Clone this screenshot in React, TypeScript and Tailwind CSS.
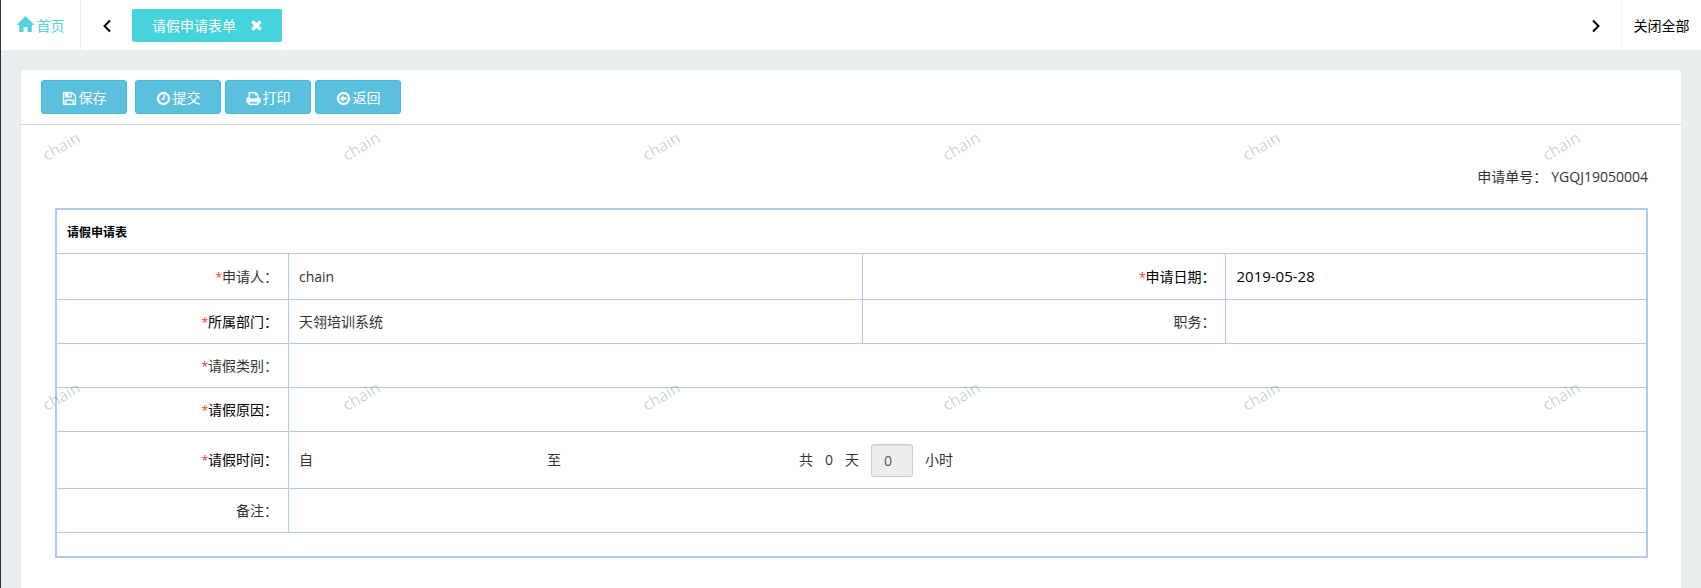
import type { ReactNode } from 'react';


// 1792-unit icon outlines used by the toolbar
const ICONS = {
	save: 'M512 1536h768v-384h-768v384zm896 0h128v-896q0-14-10-38.5t-20-34.5l-281-281q-10-10-34-20t-39-10v416q0 40-28 68t-68 28h-576q-40 0-68-28t-28-68v-416h-128v1280h128v-416q0-40 28-68t68-28h832q40 0 68 28t28 68v416zm-384-928v-320q0-13-9.5-22.5t-22.5-9.5h-192q-13 0-22.5 9.5t-9.5 22.5v320q0 13 9.5 22.5t22.5 9.5h192q13 0 22.5-9.5t9.5-22.5zm640 32v928q0 40-28 68t-68 28h-1344q-40 0-68-28t-28-68v-1344q0-40 28-68t68-28h928q40 0 88 20t76 48l280 280q28 28 48 76t20 88z',
	clock: 'M1024 544v448q0 14-9 23t-23 9h-320q-14 0-23-9t-9-23v-64q0-14 9-23t23-9h224v-352q0-14 9-23t23-9h64q14 0 23 9t9 23zm416 352q0-148-73-273t-198-198-273-73-273 73-198 198-73 273 73 273 198 198 273 73 273-73 198-198 73-273zm224 0q0 209-103 385.5t-279.5 279.5-385.5 103-385.5-103-279.5-279.5-103-385.5 103-385.5 279.5-279.5 385.5-103 385.5 103 279.5 279.5 103 385.5z',
	print: 'M448 1536h896v-256h-896v256zm0-640h896v-384h-160q-40 0-68-28t-28-68v-160h-640v640zm1152 64q0-26-19-45t-45-19-45 19-19 45 19 45 45 19 45-19 19-45zm128 0v416q0 13-9.5 22.5t-22.5 9.5h-224v160q0 40-28 68t-68 28h-960q-40 0-68-28t-28-68v-160h-224q-13 0-22.5-9.5t-9.5-22.5v-416q0-79 56.5-135.5t135.5-56.5h64v-544q0-40 28-68t68-28h672q40 0 88 20t76 48l152 152q28 28 48 76t20 88v256h64q79 0 135.5 56.5t56.5 135.5z',
	back: 'M1280 800v192q0 13-9.5 22.5t-22.5 9.5h-352v192q0 14-9 23t-23 9q-12 0-24-10l-319-319q-9-9-9-23t9-23l320-320q9-9 23-9 13 0 22.5 9.5t9.5 22.5v192h352q13 0 22.5 9.5t9.5 22.5zm160 96q0-148-73-273t-198-198-273-73-273 73-198 198-73 273 73 273 198 198 273 73 273-73 198-198 73-273zm224 0q0 209-103 385.5t-279.5 279.5-385.5 103-385.5-103-279.5-279.5-103-385.5 103-385.5 279.5-279.5 385.5-103 385.5 103 279.5 279.5 103 385.5z',
};

const ACTIONS: { label: string; icon: keyof typeof ICONS }[] = [
	{ label: '保存', icon: 'save' },
	{ label: '提交', icon: 'clock' },
	{ label: '打印', icon: 'print' },
	{ label: '返回', icon: 'back' },
];

const CELL = 'border-b border-[#b1c9ec] px-[10px]';


function Chevron({ points }: { points: string }) {
	return (
		<svg viewBox="0 0 10 14" className="h-[14px] w-[10px]" fill="none" stroke="currentColor" strokeWidth="2">
			<polyline points={points} />
		</svg>
	);
}


function TopBar() {
	return (
		<header className="flex h-[50px] shrink-0 bg-white">
			<a href="#home" className="flex w-20 items-center justify-center gap-[3px] border-r border-[#e9eeee] text-[#54d3dc]">
				<svg viewBox="0 0 17 18" className="h-[18px] w-[17px]" fill="currentColor">
					<path d="M8.5 0L17 8.6V9H14.8V16H10.5V11H6.5V16H2.2V9H0V8.6Z" />
				</svg>
				<span className="pt-0.5">首页</span>
			</a>
			<button type="button" aria-label="prev" className="flex w-[51px] items-center justify-center pt-0.5 text-black">
				<Chevron points="8,1.5 2.5,7 8,12.5" />
			</button>
			<div className="mt-[9px] flex h-[33px] w-[150px] items-center justify-between rounded-xs bg-[#46d3dc] px-5 text-white">
				<span>请假申请表单</span>
				<button type="button" aria-label="close" className="flex">
					<svg viewBox="0 0 11 11" className="h-[11px] w-[11px]" stroke="currentColor" strokeWidth="3.4">
						<path d="M1.4 1.4L9.6 9.6M9.6 1.4L1.4 9.6" />
					</svg>
				</button>
			</div>
			<nav className="ml-auto flex text-black">
				<button type="button" aria-label="next" className="flex w-[50px] items-center justify-center pt-0.5">
					<Chevron points="2,1.5 7.5,7 2,12.5" />
				</button>
				<button type="button" className="w-20 border-l border-[#e9eeee] pt-0.5">关闭全部</button>
			</nav>
		</header>
	);
}


function Toolbar() {
	return (
		<div className="flex gap-1 border-b border-[#d6d9dc] px-5 py-[10px]">
			{ACTIONS.map(({ label, icon }) => (
				<button
					key={label}
					type="button"
					className="flex h-[34px] w-[86px] items-center justify-center gap-0.5 rounded-[3px] border border-[#46b8da] bg-[#5bc0de] pt-0.5 text-white first:mr-1">
					<svg viewBox="0 0 1792 1792" className="h-[15px] w-[15px]" fill="currentColor" stroke="currentColor" strokeWidth="40">
						<path d={ICONS[icon]} />
					</svg>
					{label}
				</button>
			))}
		</div>
	);
}


// Right-aligned field name, in plain black where dark is set
function LabelCell({ children, required, dark }: { children: ReactNode; required?: boolean; dark?: boolean }) {
	return (
		<th
			scope="row"
			className={`${CELL} border-r text-right font-normal ${dark ? 'text-black' : ''}`}>
			{required && <span className="text-xs text-[#ff2a1a]">*</span>}
			{children}：
		</th>
	);
}


function LeaveForm() {
	return (
		<table className="w-full table-fixed border-separate border-spacing-0 border-2 border-[#b1c9ec]">
			<colgroup>
				<col className="w-[14.6%]" />
				<col className="w-[36.1%]" />
				<col className="w-[22.9%]" />
				<col />
			</colgroup>
			<tbody>
				<tr className="h-11">
					<th colSpan={4} className={`${CELL} pt-0.5 text-left text-xs font-bold text-black`}>请假申请表</th>
				</tr>
				<tr className="h-[46px]">
					<LabelCell required>申请人</LabelCell>
					<td className={`${CELL} border-r`}>chain</td>
					<LabelCell required dark>申请日期</LabelCell>
					<td className={`${CELL} text-[15px] text-black`}>2019-05-28</td>
				</tr>
				<tr className="h-11">
					<LabelCell required dark>所属部门</LabelCell>
					<td className={`${CELL} border-r`}>天翎培训系统</td>
					<LabelCell>职务</LabelCell>
					<td className={CELL} />
				</tr>
				<tr className="h-11">
					<LabelCell required>请假类别</LabelCell>
					<td colSpan={3} className={CELL} />
				</tr>
				<tr className="h-11">
					<LabelCell required dark>请假原因</LabelCell>
					<td colSpan={3} className={CELL} />
				</tr>
				<tr className="h-[57px]">
					<LabelCell required dark>请假时间</LabelCell>
					<td colSpan={3} className={CELL}>
						<div className="flex items-center gap-3">
							<label htmlFor="from">自</label>
							<input id="from" className="h-[33px] w-[210px] outline-none" />
							<label htmlFor="to">至</label>
							<input id="to" className="h-[33px] w-[214px] outline-none" />
							<span>共</span>
							<span>0</span>
							<label htmlFor="hours">天</label>
							<input
								id="hours"
								readOnly
								value="0"
								className="h-[33px] w-[42px] rounded-[3px] border border-[#ccc] bg-[#eee] px-3 text-[#555] shadow-[inset_0_1px_1px_rgba(0,0,0,0.075)] outline-none"
							/>
							<span>小时</span>
						</div>
					</td>
				</tr>
				<tr className="h-11">
					<LabelCell>备注</LabelCell>
					<td colSpan={3} className={CELL} />
				</tr>
				<tr className="h-[23px]">
					<td colSpan={4} />
				</tr>
			</tbody>
		</table>
	);
}


// Slanted user name repeated over the form area
function Watermark() {
	return (
		<div aria-hidden="true" className="pointer-events-none absolute inset-0 overflow-hidden pt-[9px] pl-5">
			{[0, 1].map((row) => (
				<div key={row} className="flex h-[250px]">
					{[0, 1, 2, 3, 4, 5].map((col) => (
						<div key={col} className="w-[300px] shrink-0">
							<span className="inline-block -rotate-30 text-base font-medium text-black/20">chain</span>
						</div>
					))}
				</div>
			))}
		</div>
	);
}


export default function App() {
	return (
		<div className="flex min-h-screen flex-col border-l border-[#2f3040] bg-[#e9eeee] font-['Open_Sans','Noto_Sans_CJK_SC',sans-serif] text-sm text-[#333]">
			<TopBar />
			<main className="mx-5 mt-5 flex flex-1 flex-col rounded-t-[3px] bg-white shadow-[0_0_2px_rgba(0,0,0,0.06)]">
				<Toolbar />
				<section className="relative flex-1 pr-[33px] pb-[30px] pl-[34px]">
					<p className="flex justify-end gap-1 pt-[42px] pb-[21px] leading-5">
						<span>申请单号：</span>
						<span>YGQJ19050004</span>
					</p>
					<LeaveForm />
					<Watermark />
				</section>
			</main>
		</div>
	);
}
